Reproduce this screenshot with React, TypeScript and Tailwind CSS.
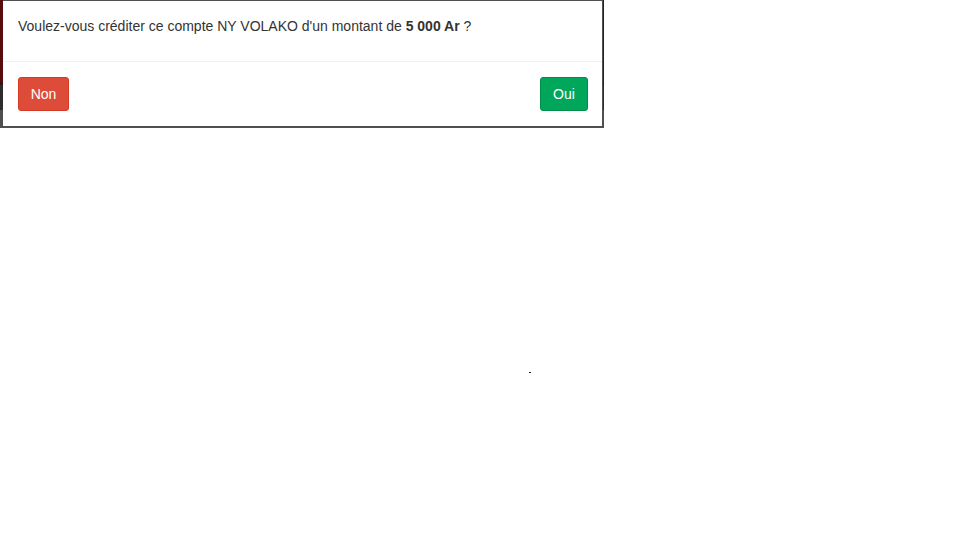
const ConfirmCredit = () => {
  const compte = 'NY VOLAKO';
  const montant = '5 000 Ar';

  return (
    <div className="relative w-[604px] h-[128px]">
      {/* page behind the modal */}
      <div className="flex flex-col w-full h-full">
        <div className="h-[82px] bg-[#560c0c]" />
        <div className="h-[3px] bg-[#3a1414]" />
        <div className="h-[25px] bg-[#2d2d2d]" />
        <div className="flex-1 bg-[#4f4f4f]" />
      </div>

      {/* modal */}
      <div className="absolute left-[3px] top-0 w-[600px] h-[128px] bg-white border-t border-r border-b-2 border-[#505050]">
        <div className="p-[15px]">
          <p className="mb-[10px] text-[14px] leading-[20px] text-[#333]">
            Voulez-vous créditer ce compte {compte} d'un montant de{' '}
            <b className="font-bold">{montant}</b> ?
          </p>
        </div>
        <div className="flex justify-between border-t border-[#f0f0f0] pt-[15px] pb-[15px] pl-[15px] pr-[14px]">
          <button className="w-[51px] h-[34px] rounded-[3px] border border-[#d73925] bg-[#dd4b39] text-[14px] leading-[20px] text-white">
            Non
          </button>
          <button className="w-[48px] h-[34px] rounded-[3px] border border-[#008d4c] bg-[#00a65a] text-[14px] leading-[20px] text-white">
            Oui
          </button>
        </div>
      </div>

      {/* stray dot */}
      <div className="absolute left-[529px] top-[372px] w-[2px] h-px bg-[#222]" />
    </div>
  );
};

export default function App() {
  return (
    <div className="w-[960px] h-[540px] bg-white font-['Liberation_Sans',Arial,sans-serif]">
      <ConfirmCredit />
    </div>
  );
}
